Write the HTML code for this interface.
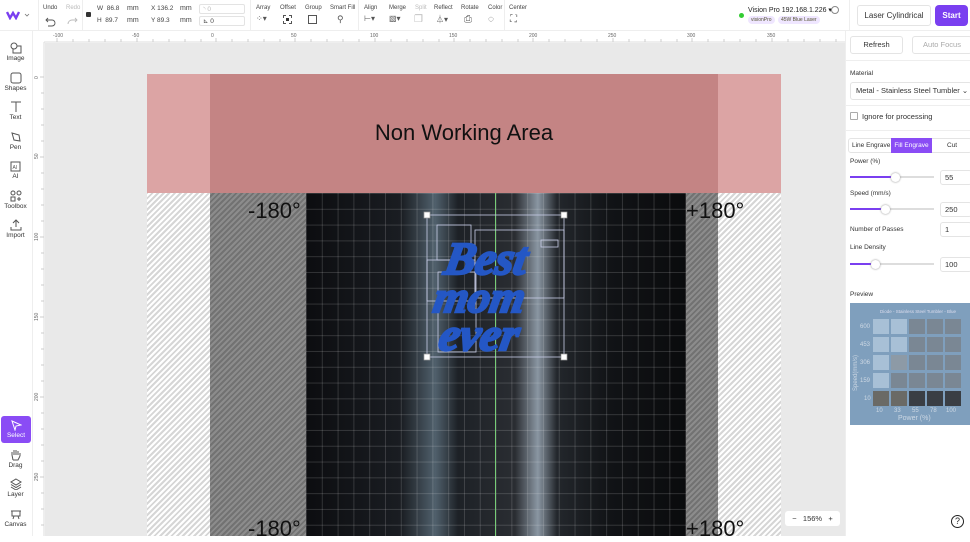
<!DOCTYPE html>
<html><head><meta charset="utf-8">
<style>
*{box-sizing:border-box;margin:0;padding:0}
body{width:970px;height:536px;overflow:hidden;background:#fff;font-family:"Liberation Sans",sans-serif;position:relative;color:#333}
.abs{position:absolute}
.tb{font-size:6px;color:#444;position:absolute;top:5px}
.tbi{position:absolute;top:14px;font-size:10px;color:#555}
.inp{position:absolute;height:10px;border:1px solid #e3e3e3;border-radius:2px;font-size:6.5px;color:#444;padding-left:3px;line-height:9px}
.side{position:absolute;left:0;width:31px;text-align:center;font-size:6.5px;color:#333}
.side svg{display:block;margin:0 auto 1px}
.lbl{position:absolute;font-size:6.5px;color:#333;left:850px}
.box{position:absolute;border:1px solid #e4e4e4;border-radius:3px;font-size:7.5px;color:#333;background:#fff}
.track{position:absolute;height:2px;background:#ddd;left:850px;width:84px}
.track i{position:absolute;left:0;top:0;height:2px;background:#7a3ff0}
.knob{position:absolute;width:9px;height:9px;border-radius:50%;background:#fff;box-shadow:0 0 2px #888;top:-3.5px}
.deg{position:absolute;font-size:22px;color:#111}
.f{position:absolute;font-size:6.5px;color:#444}
</style></head><body>
<div class="abs" style="left:0;top:0;width:970px;height:31px;background:#fff;border-bottom:1px solid #eee"></div>
<svg class="abs" style="left:6px;top:10px" width="24" height="10"><path d="M1 2 L4 8 L7 3 L10 8 L13 2" stroke="#7a3ff0" stroke-width="2.4" fill="none"/><path d="M19 4 l2 2 l2 -2" stroke="#777" fill="none" stroke-width=".8"/></svg>
<div class="abs" style="left:38px;top:0;width:1px;height:30px;background:#eee"></div>
<div class="tb" style="left:43px">Undo</div><div class="tb" style="left:66px;color:#bbb">Redo</div>
<svg class="abs" style="left:45px;top:15px" width="40" height="12"><path d="M3 3 L1 5 L3 7 M1 5 H7 a3 3 0 0 1 0 6 H3" stroke="#555" fill="none" stroke-width=".9"/><path d="M30 3 L32 5 L30 7 M32 5 H27 a4 4 0 0 0 -4 4" stroke="#bbb" fill="none" stroke-width=".9"/></svg>
<div class="abs" style="left:82px;top:0;width:1px;height:30px;background:#eee"></div>
<div class="abs" style="left:86px;top:12px;width:5px;height:5px;background:#333;border-radius:1px"></div>
<div class="f" style="left:97px;top:5px">W&nbsp; 86.8</div><div class="f" style="left:127px;top:5px;font-size:7px">mm</div>
<div class="f" style="left:97px;top:17px">H&nbsp; 89.7</div><div class="f" style="left:127px;top:17px;font-size:7px">mm</div>
<div class="f" style="left:151px;top:5px">X 136.2</div><div class="f" style="left:180px;top:5px;font-size:7px">mm</div>
<div class="f" style="left:151px;top:17px">Y 89.3</div><div class="f" style="left:180px;top:17px;font-size:7px">mm</div>
<div class="inp" style="left:199px;top:4px;width:46px;color:#bbb">◝ 0</div>
<div class="inp" style="left:199px;top:16px;width:46px">⊾ 0</div>
<div class="abs" style="left:250px;top:0;width:1px;height:30px;background:#eee"></div>
<div class="tb" style="left:256px">Array</div><div class="tb" style="left:280px">Offset</div><div class="tb" style="left:305px">Group</div><div class="tb" style="left:330px">Smart Fill</div>
<div class="tbi" style="left:256px;font-size:8px">⁘▾</div>
<div class="abs" style="left:283px;top:15px;width:9px;height:9px;border:1px dashed #555"><div style="margin:2px;width:3px;height:3px;background:#333"></div></div>
<div class="abs" style="left:308px;top:15px;width:9px;height:9px;border:1px solid #555"></div>
<div class="tbi" style="left:337px;font-size:9px">⚲</div>
<div class="abs" style="left:358px;top:0;width:1px;height:30px;background:#eee"></div>
<div class="tb" style="left:364px">Align</div><div class="tb" style="left:389px">Merge</div><div class="tb" style="left:415px;color:#bbb">Split</div><div class="tb" style="left:434px">Reflect</div><div class="tb" style="left:461px">Rotate</div><div class="tb" style="left:488px">Color</div>
<div class="tbi" style="left:364px;font-size:8px">⊢▾</div><div class="tbi" style="left:389px;font-size:8px">▧▾</div><div class="tbi" style="left:414px;color:#bbb">❐</div><div class="tbi" style="left:436px;font-size:8px">⏃▾</div><div class="tbi" style="left:464px">⎙</div><div class="tbi" style="left:488px">◌</div>
<div class="abs" style="left:504px;top:0;width:1px;height:30px;background:#eee"></div>
<div class="tb" style="left:509px">Center</div><div class="tbi" style="left:510px">⛶</div>
<div class="abs" style="left:739px;top:13px;width:5px;height:5px;border-radius:50%;background:#3c3"></div>
<div class="abs" style="left:748px;top:6px;font-size:7px;color:#222">Vision Pro 192.168.1.226 ▾</div>
<div class="abs" style="left:748px;top:16px;font-size:5px;background:#efe6ff;color:#553;padding:1px 3px;border-radius:4px">visionPro</div>
<div class="abs" style="left:778px;top:16px;font-size:5px;background:#efe6ff;color:#553;padding:1px 3px;border-radius:4px">45W Blue Laser</div>
<div class="abs" style="left:831px;top:6px;width:8px;height:8px;border:1px solid #888;border-radius:50%"></div>
<div class="abs" style="left:849px;top:0;width:1px;height:30px;background:#eee"></div>
<div class="box" style="left:857px;top:5px;width:74px;height:21px;font-size:8px;text-align:center;line-height:19px">Laser Cylindrical</div>
<div class="abs" style="left:935px;top:5px;width:33px;height:21px;background:#7a3ff0;border-radius:4px;color:#fff;font-size:8px;font-weight:bold;text-align:center;line-height:21px">Start</div>
<div class="abs" style="left:32px;top:31px;width:1px;height:505px;background:#eee"></div>
<div class="side" style="top:42px"><svg width="12" height="12"><rect x="3" y="4" width="8" height="7" fill="none" stroke="#555"/><circle cx="4" cy="4" r="3" fill="#fff" stroke="#555"/></svg>Image</div>
<div class="side" style="top:72px"><svg width="12" height="12"><rect x="1" y="1" width="10" height="10" rx="2" fill="none" stroke="#555"/></svg>Shapes</div>
<div class="side" style="top:101px"><svg width="12" height="12"><path d="M1 1H11M6 1V11" stroke="#555" fill="none"/></svg>Text</div>
<div class="side" style="top:131px"><svg width="12" height="12"><path d="M2 2 L9 4 L10 10 L4 9Z" stroke="#555" fill="none"/></svg>Pen</div>
<div class="side" style="top:160px"><svg width="12" height="12"><rect x="1" y="2" width="9" height="9" fill="none" stroke="#555"/><text x="2.5" y="9" font-size="5" fill="#555" font-family="Liberation Sans">AI</text></svg>AI</div>
<div class="side" style="top:190px"><svg width="12" height="12"><circle cx="3" cy="3" r="2" fill="none" stroke="#555"/><circle cx="9" cy="3" r="2" fill="none" stroke="#555"/><rect x="1" y="7" width="4" height="4" fill="none" stroke="#555"/><path d="M9 7V11M7 9H11" stroke="#555"/></svg>Toolbox</div>
<div class="side" style="top:219px"><svg width="12" height="12"><path d="M6 8V1M3 4L6 1L9 4M1 8V11H11V8" stroke="#555" fill="none"/></svg>Import</div>
<div class="abs" style="left:1px;top:416px;width:30px;height:27px;background:#8a4cf5;border-radius:3px;color:#fff;font-size:6.5px;text-align:center;padding-top:4px"><svg width="12" height="11" style="display:block;margin:0 auto 1px"><path d="M2 1 L11 5 L6 6 L5 10Z" stroke="#fff" fill="none"/></svg>Select</div>
<div class="side" style="top:449px"><svg width="12" height="12"><path d="M3 11 L2 6 V3 M4 6V1M6 6V1M8 6V2M10 7V4 M10 7 L8 11H3" stroke="#555" fill="none"/></svg>Drag</div>
<div class="side" style="top:478px"><svg width="12" height="12"><path d="M6 1L11 4L6 7L1 4Z M1 6.5L6 9.5L11 6.5M1 9L6 12L11 9" stroke="#555" fill="none"/></svg>Layer</div>
<div class="side" style="top:508px"><svg width="12" height="12"><path d="M1 3H11M2 3V8H10V3M4 8L3 11M8 8L9 11" stroke="#555" fill="none"/></svg>Canvas</div>
<svg class="abs" style="left:33px;top:31px" width="812" height="505">
<rect x="0" y="0" width="812" height="11" fill="#fff"/>
<rect x="0" y="0" width="11" height="505" fill="#fff"/>
<line x1="11" y1="11" x2="812" y2="11" stroke="#ddd"/>
<line x1="11" y1="11" x2="11" y2="505" stroke="#ddd"/>
<g stroke="#ccc">
<path d="M24 7V11M40 8V11M56 8V11M72 8V11M88 8V11M104 7V11M120 8V11M136 8V11M152 8V11M168 8V11M183 7V11M199 8V11M215 8V11M231 8V11M247 8V11M262 7V11M278 8V11M294 8V11M310 8V11M326 8V11M342 7V11M358 8V11M374 8V11M390 8V11M406 8V11M421 7V11M437 8V11M453 8V11M469 8V11M485 8V11M500 7V11M516 8V11M532 8V11M548 8V11M564 8V11M580 7V11M596 8V11M612 8V11M628 8V11M644 8V11M659 7V11M675 8V11M691 8V11M707 8V11M723 8V11M739 7V11M755 8V11M771 8V11M787 8V11M803 8V11"/>
<path d="M7 46H11M8 62H11M8 78H11M8 94H11M8 110H11M7 126H11M8 142H11M8 158H11M8 174H11M8 190H11M7 206H11M8 222H11M8 238H11M8 254H11M8 270H11M7 286H11M8 302H11M8 318H11M8 334H11M8 350H11M7 366H11M8 382H11M8 398H11M8 414H11M8 430H11M7 446H11M8 462H11M8 478H11M8 494H11"/>
</g>
<g font-size="5" fill="#666" font-family="Liberation Sans">
<text x="20" y="6">-100</text><text x="99" y="6">-50</text><text x="178" y="6">0</text><text x="258" y="6">50</text><text x="337" y="6">100</text><text x="416" y="6">150</text><text x="496" y="6">200</text><text x="575" y="6">250</text><text x="654" y="6">300</text><text x="734" y="6">350</text>
<text transform="translate(5,48) rotate(-90)">0</text><text transform="translate(5,128) rotate(-90)">50</text><text transform="translate(5,210) rotate(-90)">100</text><text transform="translate(5,290) rotate(-90)">150</text><text transform="translate(5,370) rotate(-90)">200</text><text transform="translate(5,450) rotate(-90)">250</text>
</g>
</svg>
<div class="abs" style="left:45px;top:43px;width:800px;height:493px;background:#e9e9e9"></div>
<div class="abs" style="left:147px;top:74px;width:634px;height:462px;background:repeating-linear-gradient(-45deg,#fff 0 2px,#d6d6d6 2px 4px)"></div>
<div class="abs" style="left:210px;top:74px;width:508px;height:462px;background:repeating-linear-gradient(-45deg,#8c8c8c 0 2px,#727272 2px 4px)"></div>
<div class="abs" style="left:306px;top:193px;width:380px;height:343px;background:linear-gradient(90deg,#0c0d10 0%,#1a1d22 25%,#50606c 34%,#1d2126 40%,#2a2d32 55%,#8a96a2 61%,#23272c 66%,#111316 80%,#0a0b0d 100%)"></div>
<div class="abs" style="left:306px;top:193px;width:380px;height:343px;background-image:linear-gradient(rgba(255,255,255,.15) 1px,transparent 1px),linear-gradient(90deg,rgba(255,255,255,.15) 1px,transparent 1px);background-size:15.8px 15.8px"></div>
<div class="abs" style="left:495px;top:193px;width:1px;height:343px;background:#7c7"></div>
<div class="abs" style="left:147px;top:74px;width:634px;height:119px;background:#dca4a4"></div>
<div class="abs" style="left:210px;top:74px;width:508px;height:119px;background:#c48484"></div>
<div class="abs" style="left:147px;top:120px;width:634px;text-align:center;font-size:22px;color:#111">Non Working Area</div>
<div class="deg" style="left:248px;top:198px">-180°</div>
<div class="deg" style="left:686px;top:198px">+180°</div>
<div class="deg" style="left:248px;top:516px">-180°</div>
<div class="deg" style="left:686px;top:516px">+180°</div>
<svg class="abs" style="left:420px;top:210px" width="152" height="155">
<g fill="none" stroke="#c8cde8" stroke-width=".8">
<rect x="7" y="5" width="137" height="142"/>
<rect x="17" y="15" width="34" height="35"/><rect x="7" y="50" width="48" height="41"/><rect x="18" y="62" width="38" height="80"/><rect x="55" y="20" width="89" height="68"/><rect x="121" y="30" width="17" height="7"/>
</g>
<g fill="#fff" stroke="#999" stroke-width=".7"><rect x="4" y="2" width="6" height="6"/><rect x="141" y="2" width="6" height="6"/><rect x="4" y="144" width="6" height="6"/><rect x="141" y="144" width="6" height="6"/></g>
<g font-family="Liberation Serif" font-style="italic" font-weight="bold" fill="#2457c5" stroke="#2457c5" stroke-width="2.5">
<text x="34" y="64" font-size="46" transform="skewX(-10)">Best</text>
<text x="30" y="102" font-size="44" transform="skewX(-10)">mom</text>
<text x="42" y="140" font-size="46" transform="skewX(-10)">ever</text>
</g>
</svg>
<div class="abs" style="left:785px;top:511px;width:55px;height:15px;background:#fff;border-radius:3px;font-size:7.5px;color:#333;line-height:15px;text-align:center">−&nbsp;&nbsp;&nbsp;156%&nbsp;&nbsp;&nbsp;+</div>
<div class="abs" style="left:845px;top:31px;width:125px;height:505px;background:#fff;border-left:1px solid #eee"></div>
<div class="box" style="left:850px;top:36px;width:53px;height:18px;text-align:center;line-height:16px">Refresh</div>
<div class="box" style="left:912px;top:36px;width:60px;height:18px;text-align:center;line-height:16px;color:#aaa">Auto Focus</div>
<div class="abs" style="left:845px;top:60px;width:125px;height:1px;background:#eee"></div>
<div class="lbl" style="top:70px">Material</div>
<div class="box" style="left:850px;top:82px;width:122px;height:18px;line-height:16px;padding-left:5px">Metal - Stainless Steel Tumbler ⌄</div>
<div class="abs" style="left:845px;top:105px;width:125px;height:1px;background:#eee"></div>
<div class="abs" style="left:850px;top:112px;width:8px;height:8px;border:1px solid #aaa;border-radius:1px"></div>
<div class="abs" style="left:862px;top:112px;font-size:7.5px">Ignore for processing</div>
<div class="abs" style="left:845px;top:130px;width:125px;height:1px;background:#eee"></div>
<div class="box" style="left:848px;top:138px;width:124px;height:15px"></div>
<div class="abs" style="left:852px;top:142px;font-size:6.5px">Line Engrave</div>
<div class="abs" style="left:891px;top:138px;width:41px;height:15px;background:#8a4cf5;color:#fff;font-size:6.5px;text-align:center;line-height:15px">Fill Engrave</div>
<div class="abs" style="left:947px;top:142px;font-size:6.5px">Cut</div>
<div class="lbl" style="top:158px">Power (%)</div>
<div class="track" style="top:176px"><i style="width:46px"></i><div class="knob" style="left:41px"></div></div>
<div class="box" style="left:940px;top:170px;width:32px;height:15px;line-height:13px;padding-left:4px">55</div>
<div class="lbl" style="top:190px">Speed (mm/s)</div>
<div class="track" style="top:208px"><i style="width:36px"></i><div class="knob" style="left:31px"></div></div>
<div class="box" style="left:940px;top:202px;width:32px;height:15px;line-height:13px;padding-left:4px">250</div>
<div class="lbl" style="top:226px">Number of Passes</div>
<div class="box" style="left:940px;top:222px;width:32px;height:15px;line-height:13px;padding-left:4px">1</div>
<div class="lbl" style="top:244px">Line Density</div>
<div class="track" style="top:263px"><i style="width:26px"></i><div class="knob" style="left:21px"></div></div>
<div class="box" style="left:940px;top:257px;width:32px;height:15px;line-height:13px;padding-left:4px">100</div>
<div class="lbl" style="top:291px">Preview</div>
<div class="abs" style="left:850px;top:303px;width:120px;height:122px;background:#7f9fbd"></div>
<svg class="abs" style="left:850px;top:303px" width="120" height="122">
<text x="30" y="10" font-size="4.5" fill="#dde" font-family="Liberation Sans">Diode - Stainless Steel Tumbler - Blue</text>
<g fill="#a8c0d6">
<rect x="23" y="16" width="16" height="15"/><rect x="41" y="16" width="16" height="15"/><rect x="23" y="34" width="16" height="15"/><rect x="41" y="34" width="16" height="15"/><rect x="23" y="52" width="16" height="15"/><rect x="23" y="70" width="16" height="15"/></g>
<g fill="#7a8794">
<rect x="59" y="16" width="16" height="15"/><rect x="77" y="16" width="16" height="15"/><rect x="95" y="16" width="16" height="15"/>
<rect x="59" y="34" width="16" height="15"/><rect x="77" y="34" width="16" height="15"/><rect x="95" y="34" width="16" height="15"/>
<rect x="41" y="52" width="16" height="15" fill="#8d9aa6"/><rect x="59" y="52" width="16" height="15"/><rect x="77" y="52" width="16" height="15"/><rect x="95" y="52" width="16" height="15"/>
<rect x="41" y="70" width="16" height="15"/><rect x="59" y="70" width="16" height="15"/><rect x="77" y="70" width="16" height="15"/><rect x="95" y="70" width="16" height="15"/>
<rect x="23" y="88" width="16" height="15" fill="#6a6a66"/><rect x="41" y="88" width="16" height="15" fill="#6a6a66"/><rect x="59" y="88" width="16" height="15" fill="#3a3e44"/><rect x="77" y="88" width="16" height="15" fill="#3a3e44"/><rect x="95" y="88" width="16" height="15" fill="#3a3e44"/></g>
<g font-size="6" fill="#cdd8e4" font-family="Liberation Sans"><text x="10" y="25">600</text><text x="10" y="43">453</text><text x="10" y="61">306</text><text x="10" y="79">159</text><text x="14" y="97">10</text>
<text x="26" y="109">10</text><text x="44" y="109">33</text><text x="62" y="109">55</text><text x="80" y="109">78</text><text x="96" y="109">100</text>
<text x="48" y="117" font-size="7">Power (%)</text><text transform="translate(7,88) rotate(-90)" font-size="6">Speed(mm/s)</text></g>
</svg>
<div class="abs" style="left:951px;top:515px;width:13px;height:13px;border:1.2px solid #222;border-radius:50%;font-size:9px;text-align:center;line-height:11px;color:#222">?</div>
</body></html>
